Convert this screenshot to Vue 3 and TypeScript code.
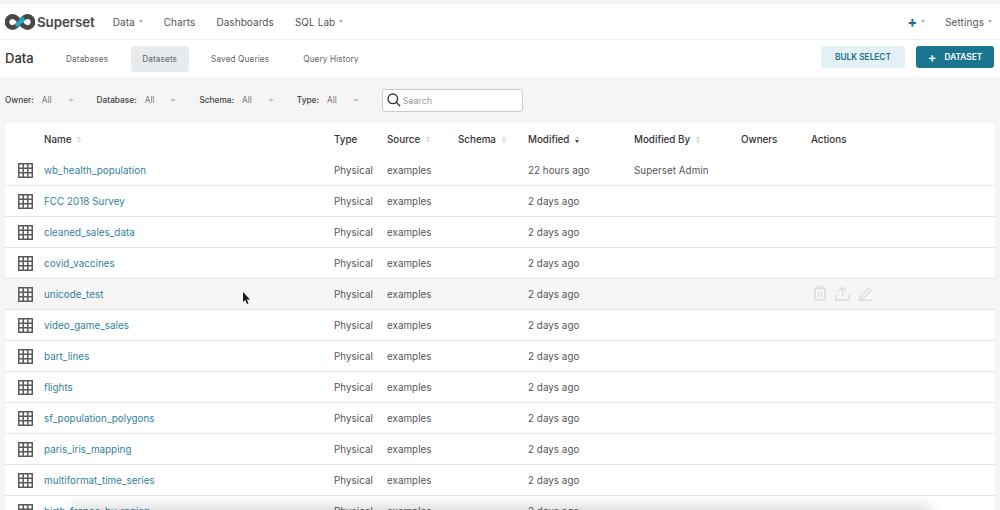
<script setup lang="ts">
type Row = { name: string; modified: string; by?: string; hover?: boolean };

const rows: Row[] = [
  { name: "wb_health_population", modified: "22 hours ago", by: "Superset Admin" },
  { name: "FCC 2018 Survey", modified: "2 days ago" },
  { name: "cleaned_sales_data", modified: "2 days ago" },
  { name: "covid_vaccines", modified: "2 days ago" },
  { name: "unicode_test", modified: "2 days ago", hover: true },
  { name: "video_game_sales", modified: "2 days ago" },
  { name: "bart_lines", modified: "2 days ago" },
  { name: "flights", modified: "2 days ago" },
  { name: "sf_population_polygons", modified: "2 days ago" },
  { name: "paris_iris_mapping", modified: "2 days ago" },
  { name: "multiformat_time_series", modified: "2 days ago" },
  { name: "birth_france_by_region", modified: "2 days ago" },
];

const columns = [
  { label: "", sort: false },
  { label: "Name", sort: true },
  { label: "Type", sort: false },
  { label: "Source", sort: true },
  { label: "Schema", sort: true },
  { label: "Modified", sort: true, active: true },
  { label: "Modified By", sort: true },
  { label: "Owners", sort: false },
  { label: "Actions", sort: false },
];

const tabs = ["Databases", "Datasets", "Saved Queries", "Query History"];
const filters = ["Owner", "Database", "Schema", "Type"];
</script>

<template>
  <div class="page">
    <header class="nav">
      <svg class="logo" width="30" height="16" viewBox="0 0 30 16" fill="none">
        <path
          d="M15 8C12.500 4.700 10.800 2.500 7.500 2.500a5.500 5.500 0 0 0 0 11C10.800 13.500 12.500 11.300 15 8 17.500 4.700 19.200 2.500 22.500 2.500a5.500 5.500 0 0 1 0 11C19.200 13.500 17.500 11.300 15 8"
          stroke="#484848"
          stroke-width="4.800"
        />
        <path d="M11 12C12.600 10.800 13.800 9.600 15 8 16.200 6.400 17.400 5.200 19 4" stroke="#20a7c9" stroke-width="4.200" />
      </svg>
      <span class="brand">Superset</span>
      <nav class="menu">
        <span class="menu-item">Data<i class="caret" /></span>
        <span class="menu-item">Charts</span>
        <span class="menu-item">Dashboards</span>
        <span class="menu-item">SQL Lab<i class="caret" /></span>
      </nav>
      <div class="nav-right">
        <span class="plus-menu"><b class="plus">+</b><i class="caret" /></span>
        <span class="menu-item">Settings<i class="caret" /></span>
      </div>
    </header>

    <section class="subnav">
      <h1 class="title">Data</h1>
      <div class="tabs">
        <span v-for="t in tabs" :key="t" class="tab" :class="{ 'tab--on': t === 'Datasets' }">{{ t }}</span>
      </div>
      <div class="actions">
        <button class="btn btn--light">BULK SELECT</button>
        <button class="btn btn--primary"><span class="btn-plus">+</span>DATASET</button>
      </div>
    </section>

    <section class="filters">
      <div v-for="f in filters" :key="f" class="filter">
        <span class="filter-label">{{ f }}:</span>
        <span class="filter-value">All</span>
        <i class="caret caret--filter" />
      </div>
      <label class="search">
        <svg width="14" height="14" viewBox="0 0 14 14" fill="none" stroke="#333" stroke-width="1.300">
          <circle cx="5.800" cy="5.800" r="4.800" />
          <path d="M9.300 9.300 13.200 13.200" />
        </svg>
        <span>Search</span>
      </label>
    </section>

    <section class="card">
      <div class="row row--head">
        <div v-for="(c, i) in columns" :key="i" class="th">
          {{ c.label }}
          <span v-if="c.sort" class="sort" :class="{ 'sort--active': c.active }"><i /><i /></span>
        </div>
      </div>
      <div v-for="r in rows" :key="r.name" class="row" :class="{ 'row--hover': r.hover }">
        <div class="cell cell--icon">
          <svg width="15" height="15" viewBox="0 0 15 15" fill="none" stroke="#5a5a5a" stroke-width="1.500">
            <rect x="0.750" y="0.750" width="13.500" height="13.500" />
            <path d="M5.200.7v13.600M9.800.7v13.600M.7 5.200h13.600M.7 9.800h13.600" />
          </svg>
        </div>
        <div class="cell cell--link">{{ r.name }}</div>
        <div class="cell">Physical</div>
        <div class="cell">examples</div>
        <div class="cell"></div>
        <div class="cell">{{ r.modified }}</div>
        <div class="cell">{{ r.by }}</div>
        <div class="cell"></div>
        <div class="cell cell--actions">
          <template v-if="r.hover">
            <svg width="14" height="16" viewBox="0 0 14 16" fill="none" stroke="#dcddde" stroke-width="1.500">
              <path d="M.5 3.500h13M4.500 3.500V1.500h5v2M2 3.500v11.500h10V3.500M5.500 6.500v6M8.500 6.500v6" />
            </svg>
            <svg width="15" height="15" viewBox="0 0 15 15" fill="none" stroke="#dcddde" stroke-width="1.500">
              <path d="M1 8.500v5.500h13V8.500M7.500 10.500V1.500M4 4.800l3.500-3.500 3.500 3.500" />
            </svg>
            <svg width="15" height="15" viewBox="0 0 15 15" fill="none" stroke="#dcddde" stroke-width="1.400">
              <path d="M2.500 10.500 10.500 2.200l2.400 2.300-8 8.200-2.800.5zM.5 14.300h13.500" />
            </svg>
          </template>
        </div>
      </div>
    </section>

    <svg class="cursor" width="9" height="13" viewBox="0 0 9 13">
      <path d="M1 0v10l2.300-2 1.700 4 1.500-.7-1.700-3.800H8z" fill="#1a1a1a" />
    </svg>
    <div class="bottom-shade" />
  </div>
</template>

<style>
html,
body {
  margin: 0;
  background: #f5f5f5;
}
</style>

<style scoped>
.page {
  position: relative;
  width: 1000px;
  height: 510px;
  overflow: hidden;
  background: #f5f5f5;
  font-family: Inter, "Liberation Sans", sans-serif;
  color: #333;
}
.nav {
  box-sizing: border-box;
  height: 37px;
  margin-top: 3px;
  padding-right: 8px;
  background: #fff;
  border-top: 1px solid #f0f0f2;
  border-bottom: 1px solid #f0f0f0;
  display: flex;
  align-items: center;
}
.logo {
  margin-left: 5px;
  flex: none;
}
.brand {
  margin-left: 2px;
  font-size: 13.400px;
  font-weight: 600;
  color: #484848;
  letter-spacing: -0.1px;
}
.menu {
  display: flex;
  margin-left: 18px;
  gap: 21px;
}
.menu-item {
  font-size: 9.950px;
  color: #555;
  display: inline-flex;
  align-items: center;
  letter-spacing: 0.1px;
}
.caret {
  display: inline-block;
  width: 0;
  height: 0;
  margin-left: 4px;
  border-left: 2.500px solid transparent;
  border-right: 2.500px solid transparent;
  border-top: 3px solid #aaa;
}
.nav-right {
  margin-left: auto;
  display: flex;
  align-items: center;
  gap: 20px;
}
.plus-menu {
  display: inline-flex;
  align-items: center;
}
.plus {
  color: #20708c;
  font-size: 14px;
  font-weight: 800;
  line-height: 1;
}
.subnav {
  box-sizing: border-box;
  height: 37px;
  background: #fff;
  display: flex;
  align-items: center;
  padding: 0 6px 0 5px;
}
.title {
  margin: 0 0 2px;
  width: 49.500px;
  font-size: 13px;
  font-weight: 500;
  color: #333;
}
.tabs {
  display: flex;
  align-items: center;
}
.tab {
  padding: 0 11.500px;
  margin-right: 11px;
  height: 26px;
  display: flex;
  align-items: center;
  border-radius: 3px;
  font-size: 8.250px;
  color: #666;
  letter-spacing: 0.1px;
}
.tab--on {
  background: #e8ebee;
}
.actions {
  margin-left: auto;
  display: flex;
  gap: 11px;
  margin-bottom: 3px;
}
.btn {
  height: 22px;
  border: 0;
  border-radius: 3px;
  font-family: inherit;
  font-size: 8.300px;
  font-weight: 600;
  padding: 0;
}
.btn--light {
  width: 84px;
  background: #e3f1f5;
  color: #20708c;
}
.btn--primary {
  width: 78px;
  background: #1a7590;
  color: #fff;
  display: flex;
  align-items: center;
  justify-content: center;
}
.btn-plus {
  font-size: 13px;
  margin-right: 8px;
  line-height: 1;
}
.filters {
  height: 46px;
  box-sizing: border-box;
  padding: 0 0 0 5px;
  display: flex;
  align-items: center;
}
.filter {
  display: flex;
  align-items: center;
  font-size: 8.300px;
  margin-right: 23px;
}
.filter-label {
  font-weight: 500;
  color: #444;
}
.filter-value {
  margin-left: 8px;
  color: #777;
}
.caret--filter {
  margin-left: 16px;
  border-left-width: 3px;
  border-right-width: 3px;
  border-top: 3px solid #c4c4c4;
}
.search {
  box-sizing: border-box;
  width: 141px;
  height: 23px;
  border: 1px solid #c8ccd0;
  border-radius: 3px;
  background: #fff;
  display: flex;
  align-items: center;
  gap: 2px;
  padding-left: 4px;
  font-size: 8.800px;
  color: #999;
}
.card {
  margin: 0 5px;
  background: #fff;
}
.row {
  display: grid;
  grid-template-columns: 39px 290px 53px 71px 70px 106px 107px 70px 1fr;
  height: 31px;
  box-sizing: border-box;
  border-bottom: 1px solid #e6e6e6;
  align-items: center;
}
.row--head {
  height: 32px;
  border-bottom: 0;
}
.row--hover {
  background: #f6f6f7;
}
.th {
  font-size: 9.800px;
  font-weight: 500;
  color: #333;
  display: flex;
  align-items: center;
}
.cell {
  font-size: 9.800px;
  color: #555;
  min-width: 0;
  white-space: nowrap;
  letter-spacing: 0.05px;
}
.cell--icon {
  display: flex;
  justify-content: center;
  padding-left: 2px;
}
.cell--link {
  color: #2f8199;
}
.cell--actions {
  display: flex;
  align-items: center;
  gap: 8px;
  padding-left: 2px;
  margin-top: -2px;
}
.sort {
  margin-left: 6px;
  display: inline-flex;
  flex-direction: column;
  gap: 1px;
}
.sort i {
  width: 0;
  height: 0;
  border-left: 2px solid transparent;
  border-right: 2px solid transparent;
  border-bottom: 3px solid #d8d8d8;
}
.sort i:last-child {
  border-bottom: 0;
  border-top: 3px solid #d8d8d8;
}
.sort--active i:last-child {
  border-top-color: #444;
}
.cursor {
  position: absolute;
  left: 242px;
  top: 292px;
}
.bottom-shade {
  position: absolute;
  left: 70px;
  right: 70px;
  bottom: -14px;
  height: 14px;
  box-shadow: 0 -3px 14px rgba(0, 0, 0, 0.18);
}
</style>
